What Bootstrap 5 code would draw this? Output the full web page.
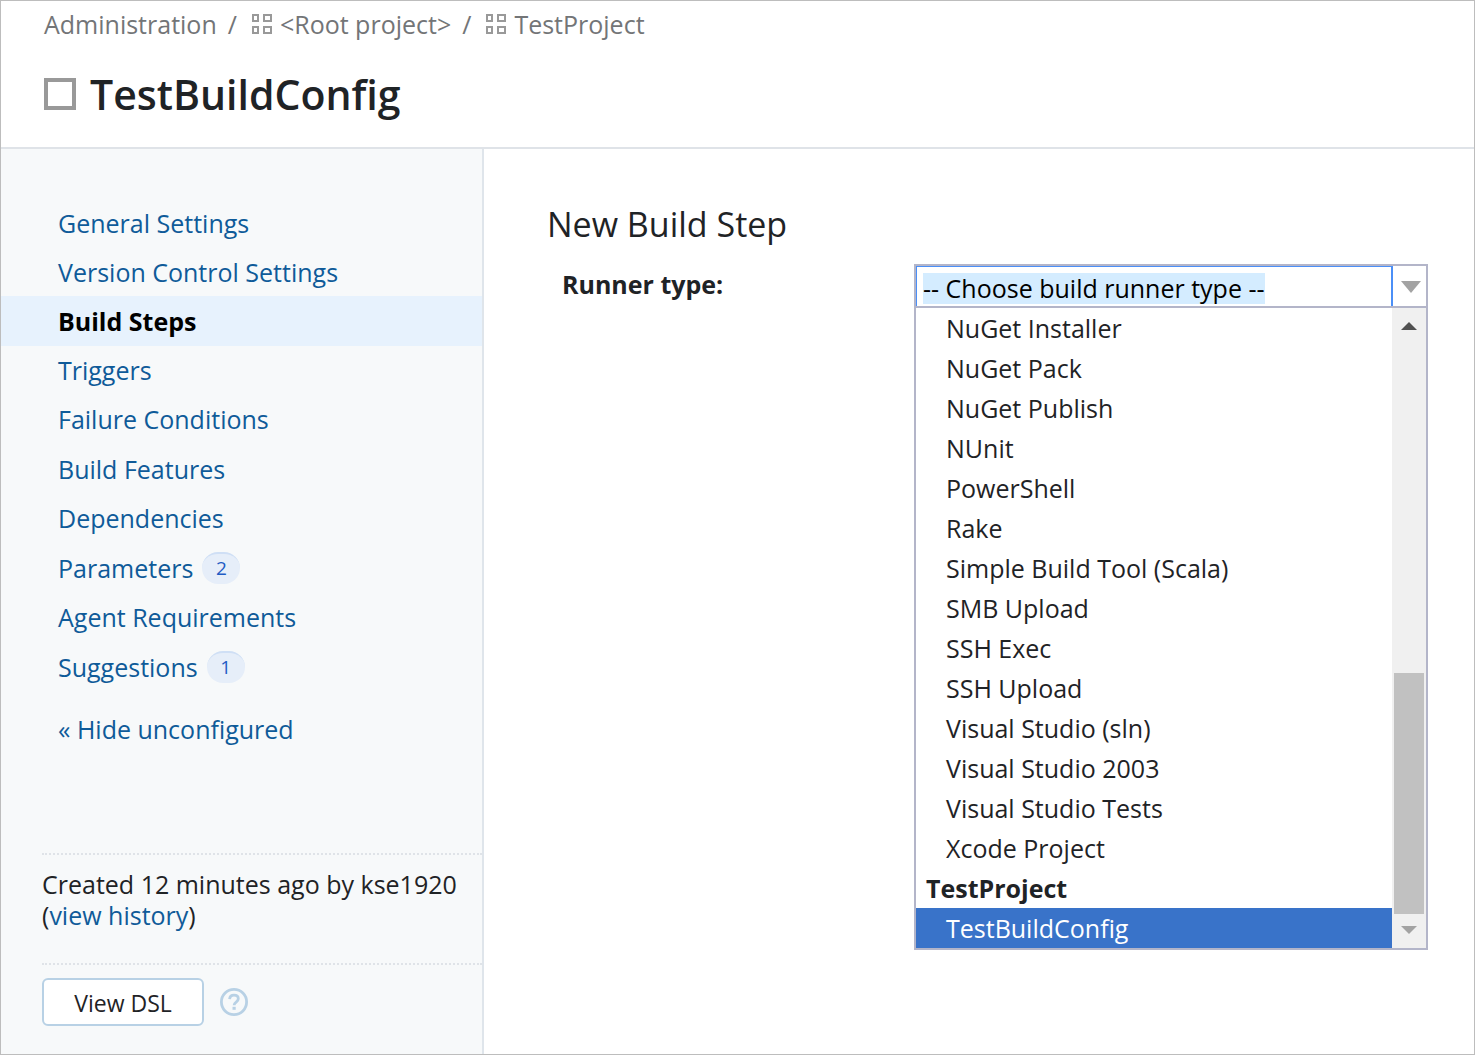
<!DOCTYPE html>
<html lang="en">
<head>
<meta charset="utf-8">
<meta name="viewport" content="width=device-width, initial-scale=1">
<title>TestBuildConfig</title>
<link href="https://cdn.jsdelivr.net/npm/bootstrap@5.3.0/dist/css/bootstrap.min.css" rel="stylesheet">
<style>
  body { font-family: "Open Sans", "Noto Sans", sans-serif; font-size: 25px; line-height: 31px; color: #1f2326; }
  .app-frame { border: 1px solid #bdbdbd; }
  .app-header { border-bottom: 2px solid #dfe3e8; padding: 7px 43px 23px; }
  .crumbs { font-size: 25px; line-height: 32px; color: #737577; gap: 11px; }
  .crumbs a { color: inherit; gap: 7px; }
  .config-title { font-size: 41px; line-height: 60px; gap: 14px; margin-top: 24px; }
  .config-box { width: 32px; height: 32px; border: 4px solid #999; }
  .side-panel { width: 483px; background: #f7f9fa; border-right: 2px solid #dfe5eb; padding-top: 49px; }
  .side-panel a { color: #0f5b99; }
  .side-nav { height: 494px; }
  .side-nav a { padding: 1px 57px 0; gap: 9px; }
  .side-nav a.active { background: #e7f2fd; color: #000; font-weight: 700; }
  .count-pill { min-width: 38px; height: 32px; border-radius: 16px; border-top: 2px solid #cfdff5; background: #e6eef9; color: #1f5cc4; font-size: 19px; line-height: 29px; text-align: center; }
  .hide-link { padding: 22px 57px; }
  .side-foot { margin-left: 41px; }
  .foot-part { border-top: 2px dotted #dfe3e8; }
  .foot-info { padding: 14px 0 32px; }
  .foot-actions { padding: 13px 0 28px; gap: 16px; }
  .dsl-btn { --bs-btn-bg: #fff; --bs-btn-border-color: #b8d1e5; --bs-btn-color: #1f2326; --bs-btn-font-size: 23px; border-width: 2px; border-radius: 6px; padding: 0; width: 162px; height: 48px; line-height: 46px; }
  .main-area { padding: 55px 46px 0 63px; }
  .step-title { font-size: 34px; line-height: 40px; margin-bottom: 20px; }
  .runner-label { padding: 5px 0 0 15px; width: 367px; }
  .runner-combo { max-width: 514px; }
  .combo-field { height: 44px; border: 2px solid #b3b5c9; }
  .combo-field input { border: 1px solid #4b8ff7; border-right-width: 2px; border-bottom: 0; padding: 4px 0 0 6px; outline: 0; color: #000; min-width: 0; }
  .combo-field input::selection { background: #d4ecff; color: #000; }
  .combo-field button { width: 33px; background: #fff; padding: 2px 0 0 2px; }
  .combo-menu { top: 44px; border: 2px solid #b3b5c9; border-top: 0; background: #fff; }
  .combo-menu li { height: 40px; line-height: 40px; padding-left: 30px; }
  .combo-menu li.group-name { padding-left: 10px; font-weight: 700; }
  .combo-menu li.picked { background: #3973c9; color: #fff; }
  .scroll-track { width: 34px; background: #f0f0f0; padding: 14px 2px; }
  .scroll-thumb { height: 241px; background: #c1c1c1; margin-bottom: 12px; }
</style>
</head>
<body>
<div class="app-frame d-flex flex-column min-vh-100">
  <header class="app-header">
    <nav class="crumbs d-flex align-items-center" aria-label="Breadcrumb">
      <a class="text-decoration-none" href="#">Administration</a>
      <span>/</span>
      <a class="text-decoration-none d-flex align-items-center ms-1" href="#">
        <svg width="21" height="21" viewBox="0 0 21 21" fill="none" stroke="#999" stroke-width="2" aria-hidden="true"><path d="M1 1h5v6H1zM12 1h7v6h-7zM1 13h5v6H1zM12 13h7v6h-7z"/></svg>
        <span>&lt;Root project&gt;</span>
      </a>
      <span>/</span>
      <a class="text-decoration-none d-flex align-items-center ms-1" href="#">
        <svg width="21" height="21" viewBox="0 0 21 21" fill="none" stroke="#999" stroke-width="2" aria-hidden="true"><path d="M1 1h5v6H1zM12 1h7v6h-7zM1 13h5v6H1zM12 13h7v6h-7z"/></svg>
        <span>TestProject</span>
      </a>
    </nav>
    <h1 class="config-title d-flex align-items-center fw-semibold mb-0"><span class="config-box"></span>TestBuildConfig</h1>
  </header>

  <div class="d-flex flex-grow-1">
    <aside class="side-panel d-flex flex-column flex-shrink-0">
      <nav class="side-nav d-flex flex-column" aria-label="Build configuration settings">
        <a class="flex-fill d-flex align-items-center text-decoration-none" href="#">General Settings</a>
        <a class="flex-fill d-flex align-items-center text-decoration-none" href="#">Version Control Settings</a>
        <a class="flex-fill d-flex align-items-center text-decoration-none active" href="#" aria-current="page">Build Steps</a>
        <a class="flex-fill d-flex align-items-center text-decoration-none" href="#">Triggers</a>
        <a class="flex-fill d-flex align-items-center text-decoration-none" href="#">Failure Conditions</a>
        <a class="flex-fill d-flex align-items-center text-decoration-none" href="#">Build Features</a>
        <a class="flex-fill d-flex align-items-center text-decoration-none" href="#">Dependencies</a>
        <a class="flex-fill d-flex align-items-center text-decoration-none" href="#">Parameters <span class="count-pill">2</span></a>
        <a class="flex-fill d-flex align-items-center text-decoration-none" href="#">Agent Requirements</a>
        <a class="flex-fill d-flex align-items-center text-decoration-none" href="#">Suggestions <span class="count-pill">1</span></a>
      </nav>
      <a class="hide-link text-decoration-none" href="#">« Hide unconfigured</a>
      <div class="side-foot mt-auto">
        <div class="foot-part foot-info">Created 12 minutes ago by kse1920<br>(<a class="text-decoration-none" href="#">view history</a>)</div>
        <div class="foot-part foot-actions d-flex align-items-center">
          <button class="btn dsl-btn" type="button">View DSL</button>
          <a href="#" class="d-flex" aria-label="Help">
            <svg width="28" height="28" viewBox="0 0 28 28" fill="none" stroke="#b8d1e5" aria-hidden="true"><circle cx="14" cy="14" r="12.6" stroke-width="2.8"/><path d="M9.6 11.2C9.8 8.5 11.6 7.2 14 7.2c2.5 0 4.3 1.4 4.3 3.6 0 3.3-4.2 3.3-4.2 6.5" stroke-width="2.8"/><path d="M14.1 18.8v3" stroke-width="3.2"/></svg>
          </a>
        </div>
      </div>
    </aside>

    <main class="main-area flex-grow-1">
      <h2 class="step-title fw-normal">New Build Step</h2>
      <div class="d-flex align-items-start">
        <label class="runner-label fw-bold flex-shrink-0" for="runner">Runner type:</label>
        <div class="runner-combo position-relative flex-grow-1">
          <div class="combo-field d-flex">
            <input class="flex-grow-1" id="runner" type="text" role="combobox" aria-expanded="true" aria-controls="runnerList" value="-- Choose build runner type --">
            <button class="border-0 d-flex align-items-center justify-content-center" type="button" aria-label="Toggle list">
              <svg width="20" height="12" viewBox="0 0 20 12" aria-hidden="true"><path d="M0 0h20L10 12z" fill="#a3a3a3"/></svg>
            </button>
          </div>
          <div class="combo-menu position-absolute start-0 end-0 d-flex">
            <ul class="list-unstyled mb-0 flex-grow-1" id="runnerList" role="listbox">
              <li role="option">NuGet Installer</li>
              <li role="option">NuGet Pack</li>
              <li role="option">NuGet Publish</li>
              <li role="option">NUnit</li>
              <li role="option">PowerShell</li>
              <li role="option">Rake</li>
              <li role="option">Simple Build Tool (Scala)</li>
              <li role="option">SMB Upload</li>
              <li role="option">SSH Exec</li>
              <li role="option">SSH Upload</li>
              <li role="option">Visual Studio (sln)</li>
              <li role="option">Visual Studio 2003</li>
              <li role="option">Visual Studio Tests</li>
              <li role="option">Xcode Project</li>
              <li class="group-name" role="presentation">TestProject</li>
              <li class="picked" role="option" aria-selected="true">TestBuildConfig</li>
            </ul>
            <div class="scroll-track d-flex flex-column align-items-stretch" aria-hidden="true">
              <svg class="align-self-center" width="16" height="8" viewBox="0 0 16 8"><path d="M0 8h16L8 0z" fill="#505050"/></svg>
              <div class="scroll-thumb mt-auto"></div>
              <svg class="align-self-center" width="16" height="8" viewBox="0 0 16 8"><path d="M0 0h16L8 8z" fill="#a3a3a3"/></svg>
            </div>
          </div>
        </div>
      </div>
    </main>
  </div>
</div>
<script src="https://cdn.jsdelivr.net/npm/bootstrap@5.3.0/dist/js/bootstrap.bundle.min.js"></script>
<script>
  const runner = document.getElementById('runner');
  runner.focus();
  runner.select();
</script>
</body>
</html>
